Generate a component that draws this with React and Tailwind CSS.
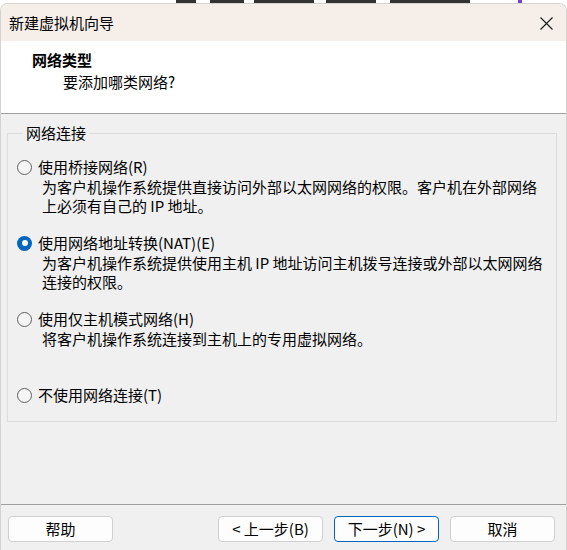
import React from 'react';

const font = "font-['Noto_Sans_CJK_SC','Noto_Sans',sans-serif]";

function Radio({checked}) {
    if (checked) {
        return (
            <span className="w-[15px] h-[15px] rounded-full bg-[#0067c0] flex items-center justify-center shrink-0">
                <span className="w-[6px] h-[6px] rounded-full bg-white" />
            </span>
        );
    }
    return <span className="w-[15px] h-[15px] rounded-full border border-[#606060] bg-[#f5f5f5] shrink-0" />;
}

function Option({label, checked, lines, last}) {
    return (
        <div className={last ? 'h-[20px]' : 'h-[76px]'}>
            <div className="flex items-center gap-[6px] h-[20px] leading-[20px]">
                <Radio checked={checked} />
                <span>{label}</span>
            </div>
            {lines && (
                <div className="pl-[25px] leading-[19px]">
                    {lines.map((l, i) => <div key={i}>{l}</div>)}
                </div>
            )}
        </div>
    );
}

function Button({children, primary}) {
    return (
        <button
            className={
                'w-[105px] h-[26px] rounded-[4px] bg-[#fdfdfd] text-[15px] leading-[20px] text-black flex items-center justify-center border ' +
                (primary ? 'border-[#0067c0]' : 'border-[#d0d0d0]')
            }
        >
            {children}
        </button>
    );
}

export default function App() {
    return (
        <div className={`w-[567px] h-[550px] bg-white overflow-hidden text-black text-[15px] ${font}`}>
            {/* strip of the desktop behind the window */}
            <div className="h-[3px] flex">
                <div className="w-[176px]" />
                <div className="w-[20px] bg-[#333]" />
                <div className="w-[14px]" />
                <div className="w-[34px] bg-[#333]" />
                <div className="w-[10px]" />
                <div className="w-[60px] bg-[#333]" />
                <div className="w-[12px]" />
                <div className="w-[50px] bg-[#333]" />
                <div className="w-[14px]" />
                <div className="w-[80px] bg-[#333]" />
                <div className="w-[48px]" />
                <div className="w-[4px] bg-[#7a3fd0]" />
            </div>

            <div className="h-[547px] flex flex-col rounded-t-[8px] overflow-hidden border-x border-t border-[#d6d2cf]">
                <div className="h-[37px] shrink-0 bg-[#f6efe9] flex items-center justify-between pl-[8px] pr-[13px]">
                    <span className="leading-[20px] mt-[1px]">新建虚拟机向导</span>
                    <svg width="13" height="13" viewBox="0 0 13 13" className="mt-[1px]">
                        <path d="M0.5 0.5 L12.5 12.5 M12.5 0.5 L0.5 12.5" stroke="#1a1a1a" strokeWidth="1.1" />
                    </svg>
                </div>

                <div className="h-[73px] shrink-0 bg-white border-b border-[#a0a0a0] pt-[9px]">
                    <div className="pl-[31px] font-bold leading-[20px]">网络类型</div>
                    <div className="pl-[62px] leading-[20px] mt-[2px]">要添加哪类网络?</div>
                </div>

                <div className="flex-1 bg-[#f0f0f0] flex flex-col">
                    <fieldset className="mt-[9px] ml-[6px] w-[550px] border border-[#dcdcdc] pl-[9px] pt-[14px] pb-[16px]">
                        <legend className="ml-[6px] px-[3px] leading-[20px]">网络连接</legend>
                        <Option
                            label="使用桥接网络(R)"
                            lines={['为客户机操作系统提供直接访问外部以太网网络的权限。客户机在外部网络', '上必须有自己的 IP 地址。']}
                        />
                        <Option
                            checked
                            label="使用网络地址转换(NAT)(E)"
                            lines={['为客户机操作系统提供使用主机 IP 地址访问主机拨号连接或外部以太网网络', '连接的权限。']}
                        />
                        <Option label="使用仅主机模式网络(H)" lines={['将客户机操作系统连接到主机上的专用虚拟网络。']} />
                        <Option label="不使用网络连接(T)" last />
                    </fieldset>

                    <div className="flex-1" />

                    <div className="h-[46px] shrink-0 border-t border-[#a0a0a0] flex items-start pt-[11px] pl-[7px] pr-[11px]">
                        <Button>帮助</Button>
                        <div className="flex-1" />
                        <div className="flex gap-[11px]">
                            <Button>&lt; 上一步(B)</Button>
                            <Button primary>下一步(N) &gt;</Button>
                            <Button>取消</Button>
                        </div>
                    </div>
                </div>
            </div>
        </div>
    );
}
